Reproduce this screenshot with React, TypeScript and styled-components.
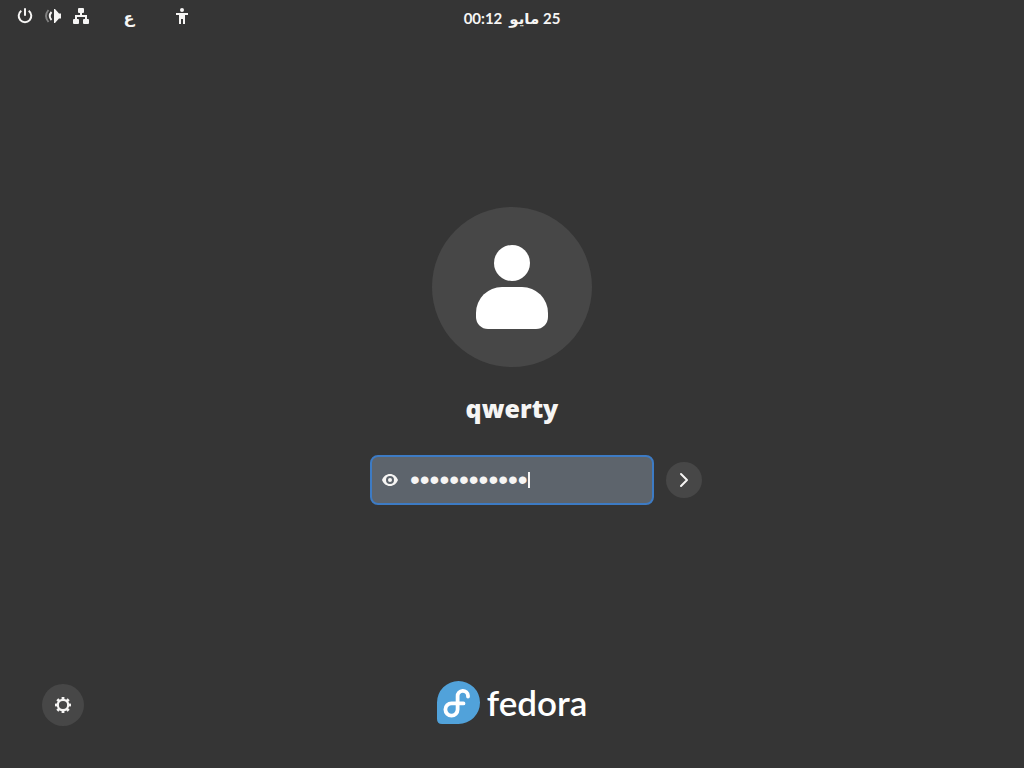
import React, { useState } from "react";
import styled, { createGlobalStyle } from "styled-components";

const GlobalStyle = createGlobalStyle`
  *, *::before, *::after { box-sizing: border-box; }
  body {
    margin: 0;
    background: #353535;
    color: #f6f5f4;
    font-family: Lato, "DejaVu Sans", sans-serif;
    font-size: 15px;
  }
  button {
    border: 0;
    padding: 0;
    background: none;
    color: inherit;
    font: inherit;
    cursor: pointer;
  }
  svg { display: block; }
`;

const Screen = styled.div`
  display: grid;
  grid-template-rows: auto 1fr auto;
  min-height: 100vh;
`;

const TopBar = styled.header`
  display: grid;
  grid-template-columns: 1fr auto 1fr;
  align-items: center;
  height: 36px;
`;

const Indicators = styled.div`
  display: flex;
  align-items: center;
  align-self: start;
  height: 32px;
  padding-left: 17px;
`;

const SystemButton = styled.button`
  display: flex;
  align-items: center;
  gap: 12px;
  margin-right: 32px;
`;

const KeyboardButton = styled.button`
  width: 16px;
  margin-right: 37px;
  padding-top: 4px;
  font-family: "DejaVu Sans", sans-serif;
  font-size: 16px;
  font-weight: 700;
  line-height: 20px;
`;

const Clock = styled.time`
  display: flex;
  gap: 7px;
  font-size: 15px;
  font-weight: 700;
  line-height: 20px;
`;

const Main = styled.main`
  display: flex;
  flex-direction: column;
  align-items: center;
  justify-content: center;
`;

const Avatar = styled.div`
  display: grid;
  place-items: center;
  width: 160px;
  height: 160px;
  border-radius: 50%;
  background: #474747;
  color: #fff;
`;

const UserName = styled.h1`
  margin: 23px 0 29px;
  font-family: "Open Sans", sans-serif;
  font-size: 25px;
  font-weight: 800;
  line-height: 36px;
`;

const LoginForm = styled.form`
  display: grid;
  grid-template-columns: 1fr 284px 1fr;
  align-items: center;
  gap: 12px;
  width: 100%;
`;

const PasswordField = styled.div`
  grid-column: 2;
  display: flex;
  align-items: center;
  height: 50px;
  padding: 0 10px;
  border: 2px solid #3d7bc4;
  border-radius: 8px;
  background: #5d646c;
`;

const EntryLabel = styled.label`
  display: flex;
  flex: 1;
  align-items: center;
  min-width: 0;
  height: 100%;
  margin-left: 12px;
  cursor: text;
`;

const PasswordInput = styled.input`
  field-sizing: content;
  max-width: 100%;
  padding: 0;
  border: 0;
  outline: 0;
  background: none;
  color: inherit;
  caret-color: transparent;
  font-family: "Liberation Sans", sans-serif;
  font-size: 28px;
  line-height: 32px;
`;

const Caret = styled.span`
  width: 2px;
  height: 16px;
  background: #f6f5f4;
`;

const RoundButton = styled.button<{ $size: number }>`
  display: grid;
  place-items: center;
  width: ${({ $size }) => $size}px;
  height: ${({ $size }) => $size}px;
  border-radius: 50%;
  background: #474747;
`;

const Footer = styled.footer`
  display: grid;
  grid-template-columns: 1fr auto 1fr;
  align-items: end;
  padding: 5px 42px 42px;
`;

const Brand = styled.div`
  display: flex;
  align-items: center;
  gap: 7px;
  height: 43px;
  margin-bottom: 2px;
  color: #fff;
`;

const BrandName = styled.span`
  font-size: 35px;
  font-weight: 600;
  line-height: 43px;
`;

const PowerIcon = () => (
  <svg width="16" height="16" viewBox="0 0 16 16" fill="none" stroke="currentColor" strokeWidth="2">
    <path d="M4.300 2.800A6.300 6.300 0 1 0 11.700 2.800" />
    <path d="M8 1v6" strokeLinecap="round" />
  </svg>
);

const VolumeIcon = () => (
  <svg width="16" height="16" viewBox="0 0 16 16">
    <path d="M16 5.500v5h-2L10 15H9V1h1l4 4.500z" fill="currentColor" />
    <path d="M6.500 4Q3 8 6.500 12" fill="none" stroke="currentColor" strokeWidth="1.900" />
    <path d="M3.500 2Q-1.500 8 3.500 14" fill="none" stroke="currentColor" strokeWidth="1.900" opacity=".4" />
  </svg>
);

const NetworkIcon = () => (
  <svg width="16" height="16" viewBox="0 0 16 16" fill="currentColor">
    <rect x="5" y="0" width="6" height="5" rx="1" />
    <rect x="0" y="11" width="6" height="5" rx="1" />
    <rect x="10" y="11" width="6" height="5" rx="1" />
    <path d="M7 4h2v3h5v5h-2V9H4v3H2V7h5z" />
  </svg>
);

const AccessibilityIcon = () => (
  <svg width="16" height="16" viewBox="0 0 16 16" fill="currentColor">
    <circle cx="8" cy="2" r="2" />
    <path d="M2 5h12v2h-3v9H9v-5H7v5H5V7H2z" />
  </svg>
);

const PersonIcon = () => (
  <svg width="96" height="96" viewBox="0 0 96 96" fill="currentColor">
    <circle cx="48" cy="24" r="18" />
    <path d="M12 74A26 26 0 0 1 38 48H58A26 26 0 0 1 84 74V78A12 12 0 0 1 72 90H24A12 12 0 0 1 12 78z" />
  </svg>
);

const EyeIcon = () => (
  <svg width="16" height="16" viewBox="0 0 16 16">
    <path
      fill="currentColor"
      fillRule="evenodd"
      d="M8 2C4.500 2 1.400 4.300 0 8c1.400 3.700 4.500 6 8 6s6.600-2.300 8-6c-1.400-3.700-4.500-6-8-6zM8 4a4 4 0 1 1 0 8 4 4 0 0 1 0-8z"
    />
    <circle cx="8" cy="8" r="2" fill="currentColor" />
  </svg>
);

const ArrowIcon = () => (
  <svg width="16" height="16" viewBox="0 0 16 16" fill="none" stroke="currentColor" strokeWidth="2">
    <path d="M5 2l6 6-6 6" strokeLinecap="round" strokeLinejoin="round" />
  </svg>
);

const teeth = [0, 45, 90, 135, 180, 225, 270, 315];

const GearIcon = () => (
  <svg width="16" height="16" viewBox="0 0 16 16">
    <circle cx="8" cy="8" r="5.200" fill="none" stroke="currentColor" strokeWidth="2.200" />
    {teeth.map((angle) => (
      <path key={angle} d="M6.600 3V0h2.800v3z" fill="currentColor" transform={`rotate(${angle} 8 8)`} />
    ))}
  </svg>
);

const FedoraMark = () => (
  <svg width="43" height="43" viewBox="0 0 43 43">
    <path d="M21.500 0A21.500 21.500 0 0 1 21.500 43H5Q0 43 0 38V21.500A21.500 21.500 0 0 1 21.500 0z" fill="#51a2da" />
    <path
      d="M31 15.500V14.800A5.200 5.200 0 0 0 20.600 15.200V28.500A6.100 6.100 0 1 1 14.500 22.400H26.500"
      fill="none"
      stroke="#fff"
      strokeWidth="3.800"
      strokeLinecap="round"
    />
  </svg>
);

export default function App() {
  const [password, setPassword] = useState("fedoralinux1");
  const [visible, setVisible] = useState(false);

  return (
    <Screen>
      <GlobalStyle />
      <TopBar>
        <Indicators>
          <SystemButton type="button" aria-label="النظام">
            <PowerIcon />
            <VolumeIcon />
            <NetworkIcon />
          </SystemButton>
          <KeyboardButton type="button" lang="ar">ع</KeyboardButton>
          <button type="button" aria-label="إمكانية الوصول">
            <AccessibilityIcon />
          </button>
        </Indicators>
        <Clock dir="rtl" lang="ar">
          <span>25 مايو</span>
          <span>00:12</span>
        </Clock>
      </TopBar>
      <Main>
        <Avatar>
          <PersonIcon />
        </Avatar>
        <UserName>qwerty</UserName>
        <LoginForm onSubmit={(event) => event.preventDefault()}>
          <PasswordField>
            <button type="button" aria-label="إظهار كلمة السر" onClick={() => setVisible(!visible)}>
              <EyeIcon />
            </button>
            <EntryLabel>
              <PasswordInput
                type={visible ? "text" : "password"}
                aria-label="كلمة السر"
                value={password}
                onChange={(event) => setPassword(event.target.value)}
              />
              <Caret />
            </EntryLabel>
          </PasswordField>
          <RoundButton $size={36} type="submit" aria-label="دخول">
            <ArrowIcon />
          </RoundButton>
        </LoginForm>
      </Main>
      <Footer>
        <RoundButton $size={42} type="button" aria-label="الإعدادات">
          <GearIcon />
        </RoundButton>
        <Brand>
          <FedoraMark />
          <BrandName>fedora</BrandName>
        </Brand>
      </Footer>
    </Screen>
  );
}
